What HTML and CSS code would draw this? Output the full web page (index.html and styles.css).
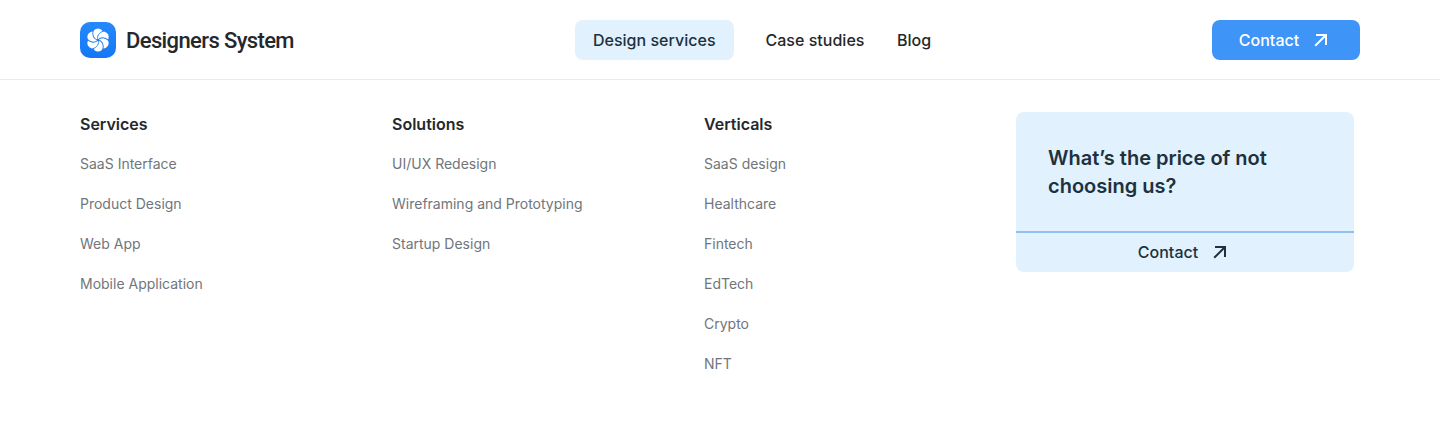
FILE: index.html
```html
<!DOCTYPE html>
<html lang="en">
<head>
<meta charset="utf-8">
<title>Designers System</title>
<link rel="stylesheet" href="styles.css">
</head>
<body>
<header class="header">
  <a class="brand">
    <svg class="logo" viewBox="0 0 36 36" width="36" height="36">
      <defs>
        <linearGradient id="bg" x1="0" y1="0" x2="0" y2="1"><stop offset="0" stop-color="#2589fb"/><stop offset="1" stop-color="#1677f5"/></linearGradient>
        <circle id="lobe" cx="18" cy="11.8" r="5.3"/>
        <path id="fold" d="M18 18C16.6 14.2 18.8 10.6 23.6 9"/>
      </defs>
      <rect width="36" height="36" rx="10" fill="url(#bg)"/>
      <g class="petals">
        <use href="#lobe"/>
        <use href="#lobe" transform="rotate(60 18 18)"/>
        <use href="#lobe" transform="rotate(120 18 18)"/>
        <use href="#lobe" transform="rotate(180 18 18)"/>
        <use href="#lobe" transform="rotate(240 18 18)"/>
        <use href="#lobe" transform="rotate(300 18 18)"/>
      </g>
      <g class="folds">
        <use href="#fold"/>
        <use href="#fold" transform="rotate(60 18 18)"/>
        <use href="#fold" transform="rotate(120 18 18)"/>
        <use href="#fold" transform="rotate(180 18 18)"/>
        <use href="#fold" transform="rotate(240 18 18)"/>
        <use href="#fold" transform="rotate(300 18 18)"/>
      </g>
    </svg>
    <span class="brand-name">Designers System</span>
  </a>
  <nav class="nav">
    <a class="nav-link active">Design services</a>
    <a class="nav-link">Case studies</a>
    <a class="nav-link">Blog</a>
  </nav>
  <a class="button"><span>Contact</span><svg class="arrow" viewBox="0 0 14 14" width="14" height="14"><path d="M1.2 12.8L12 2M2 2h10v10"/></svg></a>
</header>
<main class="menu">
  <section class="column"><h2>Services</h2><a>SaaS Interface</a><a>Product Design</a><a>Web App</a><a>Mobile Application</a></section>
  <section class="column"><h2>Solutions</h2><a>UI/UX Redesign</a><a>Wireframing and Prototyping</a><a>Startup Design</a></section>
  <section class="column"><h2>Verticals</h2><a>SaaS design</a><a>Healthcare</a><a>Fintech</a><a>EdTech</a><a>Crypto</a><a>NFT</a></section>
  <aside class="card">
    <p class="card-title">What’s the price of not<br>choosing us?</p>
    <a class="card-link"><span>Contact</span><svg class="arrow" viewBox="0 0 14 14" width="14" height="14"><path d="M1.2 12.8L12 2M2 2h10v10"/></svg></a>
  </aside>
</main>
</body>
</html>
```
FILE: styles.css
```css
* { box-sizing: border-box; }
body { margin: 0; background: #fff; font-family: Inter, sans-serif; color: #25282b; }
.header { height: 80px; padding: 0 80px; display: grid; grid-template-columns: 495px 1fr 148px; align-items: center; border-bottom: 1px solid #e9ecef; }
.brand { display: flex; align-items: center; gap: 10px; }
.logo { display: block; }
.petals { fill: #fff; }
.folds { fill: none; stroke: #1b7df3; stroke-width: .9; }
.brand-name { padding-top: 2px; font: 500 22px/28px Roboto, sans-serif; white-space: nowrap; letter-spacing: -.62px; }
.nav { display: flex; align-items: center; }
.nav-link { font-size: 16px; line-height: 24px; font-weight: 500; margin-right: 32.5px; white-space: nowrap; letter-spacing: .02px; }
.active { width: 158.5px; height: 40px; margin-right: 32px; display: flex; align-items: center; justify-content: center; border-radius: 8px; background: #e1f1fe; color: #20303d; }
.button { height: 40px; padding-right: 5px; display: flex; align-items: center; justify-content: center; gap: 15px; border-radius: 8px; background: #3f94f7; color: #fff; font-size: 16px; font-weight: 500; letter-spacing: .05px; }
.arrow { fill: none; stroke: currentColor; stroke-width: 2; }
.menu { display: grid; grid-template-columns: 312px 312px 312px 338px; align-items: start; padding: 32px 80px; }
.column { display: flex; flex-direction: column; gap: 16px; }
.column h2 { margin: 0; font-size: 16px; line-height: 24px; font-weight: 600; }
.column a { font-size: 14px; line-height: 24px; color: #70767b; }
.card { height: 160px; display: flex; flex-direction: column; border-radius: 8px; background: #e1f1fe; overflow: hidden; color: #20303d; }
.card-title { margin: 0; padding: 32px 32px 0; height: 119px; font-size: 20px; line-height: 28px; font-weight: 600; }
.card-link { height: 41px; padding: 0 5px 2px 0; border-top: 2px solid #8fc0f0; display: flex; align-items: center; justify-content: center; gap: 15px; font-size: 16px; font-weight: 500; letter-spacing: .05px; }
```
